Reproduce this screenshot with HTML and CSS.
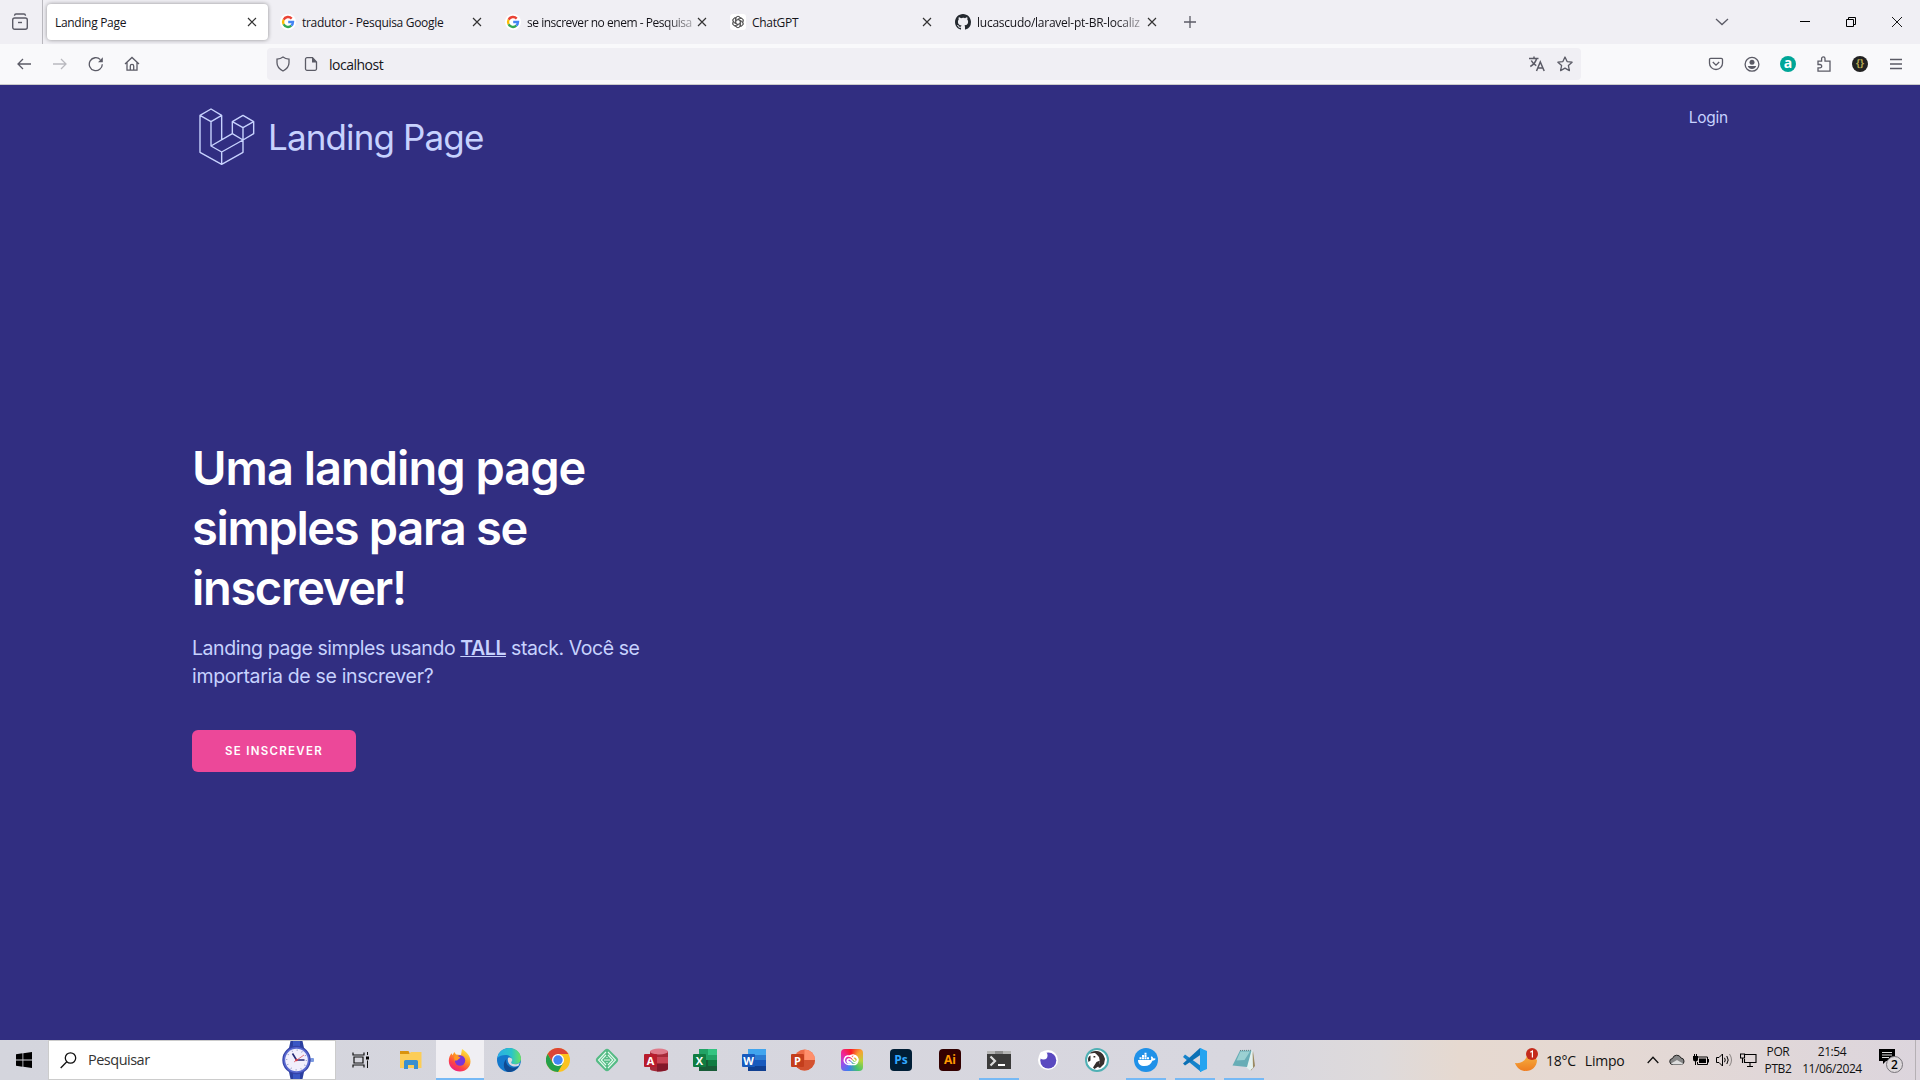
FILE: index.html
```html
<!DOCTYPE html>
<html lang="pt-BR">
<head>
<meta charset="utf-8">
<title>Landing Page</title>
<link rel="stylesheet" href="styles.css">
</head>
<body>
<svg class="defs" width="0" height="0" aria-hidden="true">
  <symbol id="close" viewBox="0 0 10 10"><path d="M1 1l8 8M9 1L1 9" fill="none" stroke="#333" stroke-width="1.15"/></symbol>
  <symbol id="google" viewBox="0 0 16 16"><circle cx="8" cy="8" r="8" fill="#fff"/><g fill="none" stroke-width="2.4"><path d="M11.7 4.6A5 5 0 0 0 3.6 5.7" stroke="#ea4335"/><path d="M3.6 5.7a5 5 0 0 0 0 4.6" stroke="#fbbc05"/><path d="M3.6 10.3a5 5 0 0 0 7.7 1.4" stroke="#34a853"/><path d="M11.3 11.7A5 5 0 0 0 13 8H8.2" stroke="#4285f4"/></g></symbol>
</svg>

<header class="browser">
  <div class="tabstrip">
    <div class="recent"><svg width="18" height="18" viewBox="0 0 18 18"><g fill="none" stroke="#5b5b66" stroke-width="1.4"><path d="M3.500 2.800C3.600 1.600 4 1 5 1h8c1 0 1.400.6 1.500 1.800"/><rect x="1.700" y="5" width="14.600" height="11.300" rx="2"/><path d="M7 9.500h4"/></g></svg></div>
    <div class="tab active"><span class="title">Landing Page</span><svg class="x"><use href="#close"/></svg></div>
    <div class="tab"><svg class="fav"><use href="#google"/></svg><span class="title">tradutor - Pesquisa Google</span><svg class="x"><use href="#close"/></svg></div>
    <div class="tab"><svg class="fav"><use href="#google"/></svg><span class="title fade">se inscrever no enem - Pesquisa</span><svg class="x"><use href="#close"/></svg></div>
    <div class="tab"><svg class="fav" viewBox="0 0 16 16"><rect width="16" height="16" rx="3" fill="#fff"/><g fill="none" stroke="#333" stroke-width=".65"><path id="petal" d="M6 8.900V5c0-3.300 4.200-3.300 4.600-.8M6 6.200l3.300-1.900c2.800-1.500 4.700 1.500 3.300 3.500"/><use href="#petal" transform="rotate(60 8 8)"/><use href="#petal" transform="rotate(120 8 8)"/><use href="#petal" transform="rotate(180 8 8)"/><use href="#petal" transform="rotate(240 8 8)"/><use href="#petal" transform="rotate(300 8 8)"/></g></svg><span class="title">ChatGPT</span><svg class="x"><use href="#close"/></svg></div>
    <div class="tab"><svg class="fav" viewBox="0 0 16 16"><path fill="#24292f" d="M8 0C3.580 0 0 3.580 0 8c0 3.540 2.290 6.530 5.470 7.590.4.070.55-.17.55-.38 0-.19-.01-.82-.01-1.490-2.010.37-2.530-.49-2.690-.94-.09-.23-.48-.94-.82-1.130-.28-.15-.68-.52-.01-.53.63-.01 1.080.58 1.230.82.72 1.210 1.870.87 2.330.66.070-.52.28-.87.51-1.070-1.780-.2-3.640-.89-3.640-3.950 0-.87.31-1.590.82-2.150-.08-.2-.36-1.020.08-2.120 0 0 .67-.21 2.200.82A7.600 7.600 0 0 1 8 3.860c.68 0 1.360.09 2 .27 1.530-1.040 2.200-.82 2.200-.82.44 1.100.16 1.920.08 2.120.51.56.82 1.270.82 2.150 0 3.070-1.870 3.750-3.650 3.950.29.25.54.73.54 1.480 0 1.070-.01 1.930-.01 2.200 0 .21.15.46.55.38A8.010 8.010 0 0 0 16 8c0-4.420-3.580-8-8-8z"/></svg><span class="title fade wide">lucascudo/laravel-pt-BR-localiz</span><svg class="x"><use href="#close"/></svg></div>
    <svg class="plus" width="14" height="14" viewBox="0 0 14 14"><path d="M7 1v12M1 7h12" stroke="#5b5b66" stroke-width="1.300"/></svg>
    <div class="winctl">
      <svg class="chev" width="14" height="8" viewBox="0 0 14 8"><path d="M1 1l6 5.500L13 1" fill="none" stroke="#5b5b66" stroke-width="1.300"/></svg>
      <svg width="46" height="44"><path d="M18 21.500h10" stroke="#000"/></svg>
      <svg width="46" height="44"><path d="M18.500 19.500h7v7h-7zM20.500 19.500v-2h7v7h-2" fill="none" stroke="#000"/></svg>
      <svg width="46" height="44"><path d="M18 17l10 10M28 17L18 27" stroke="#000" stroke-width=".9"/></svg>
    </div>
  </div>
  <div class="toolbar">
    <div class="nav">
      <svg viewBox="0 0 16 16"><path d="M15 8H2M7 3L2 8l5 5"/></svg>
      <svg class="off" viewBox="0 0 16 16"><path d="M1 8h13M9 3l5 5-5 5"/></svg>
      <svg viewBox="0 0 16 16"><path d="M14.300 8.200A6.500 6.500 0 1 1 12.400 3.600"/><path d="M14.800 1.200v5H10z" fill="#5b5b66" stroke="none"/></svg>
      <svg viewBox="0 0 16 16"><path d="M1 8l7-6.500L15 8M3 6.500V14.200h10V6.500M6.300 14v-4a1.700 1.700 0 0 1 3.400 0v4"/></svg>
    </div>
    <div class="url">
      <svg viewBox="0 0 16 16"><path d="M8 1c2 1.500 4 2 6 2.200v3.600c0 3.800-3 6.700-6 8.200-3-1.500-6-4.400-6-8.200V3.200C4 3 6 2.500 8 1z"/></svg>
      <svg viewBox="0 0 16 16"><path d="M9.500 1.700H4a1.500 1.500 0 0 0-1.500 1.500v9.600A1.500 1.500 0 0 0 4 14.300h8a1.500 1.500 0 0 0 1.500-1.500V6z"/><path d="M9 1.200V6.500h5z" fill="#5b5b66" stroke="none"/></svg>
      <span class="host">localhost</span>
      <svg viewBox="0 0 16 16"><path d="M0 2.500h9.500M5 .5v2M1.300 10.500c4-2.300 5.500-4.500 6.300-8M2.300 4.500c1 2.200 2.800 4 5 5.200M7.500 15l3.800-9 3.900 9M9 12h4.800" stroke-width="1.500"/></svg>
      <svg viewBox="0 0 16 16"><path d="M8 1l2.100 4.600 5 .6-3.700 3.400 1 5L8 12.100l-4.400 2.500 1-5L.9 6.200l5-.6z" stroke-linejoin="round"/></svg>
    </div>
    <div class="ext">
      <svg viewBox="0 0 16 16"><path d="M2.700 2.300h10.600c.7 0 1.200.5 1.200 1.200v3.700a6.500 6.300 0 0 1-13 0V3.500c0-.7.5-1.200 1.200-1.200zM4.800 6L8 9.200 11.200 6"/></svg>
      <svg viewBox="0 0 16 16"><circle cx="8" cy="8.300" r="6.900"/><g fill="#5b5b66" stroke="none"><circle cx="8" cy="6.300" r="2.500"/><path d="M3.800 10h8.400c-.5 1.900-2.200 2.900-4.200 2.900s-3.700-1-4.200-2.900z"/></g></svg>
      <span class="badge teal">a</span>
      <svg viewBox="0 0 16 16"><path d="M2 5.200h3.600V2.600a1.700 1.700 0 0 1 3.400 0v2.600h5v10H2v-3.300h2a1.700 1.700 0 0 0 0-3.400H2z"/></svg>
      <span class="badge dark">{}</span>
      <svg viewBox="0 0 16 16"><path d="M2 3.500h12M2 8h12M2 12.500h12"/></svg>
    </div>
  </div>
</header>

<main class="page">
  <nav class="top">
    <a class="brand"><svg width="57" height="58" viewBox="56 54 171 174"><path fill="none" stroke="#c7d2fe" stroke-width="4.200" stroke-linejoin="round" d="M92 57l32 19-32 19-33-19zM59 76v111l65 36 64-36v-37M92 95v73l32 18 64-36M124 76v74M92 168l64-37M124 186v37M188 76l32 19-32 18-32-18zM156 95v36l32 19 32-19V95M188 113v37"/></svg><span>Landing Page</span></a>
    <a class="login">Login</a>
  </nav>
  <section class="hero">
    <h1>Uma landing page<br><span class="tight">simples para se</span><br><span class="tight">inscrever!</span></h1>
    <p><span class="lead">Landing page simples usando <b>TALL</b> stack. Você se</span><br>importaria de se inscrever?</p>
    <button>SE INSCREVER</button>
  </section>
</main>

<footer class="taskbar">
  <div class="start"><svg width="16" height="16" viewBox="0 0 16 16"><path d="M0 2.200L6.500 1.300V7.600H0zM7.300 1.200L16 0v7.600H7.300zM0 8.400h6.500v6.300L0 13.800zM7.300 8.400H16V16l-8.700-1.200z"/></svg></div>
  <div class="search">
    <svg width="17" height="17" viewBox="0 0 17 17"><g fill="none" stroke="#111" stroke-width="1.300"><circle cx="10.500" cy="6" r="5.200"/><path d="M6.800 9.800L.7 16"/></g></svg>
    <span>Pesquisar</span>
    <svg class="watch" width="34" height="38" viewBox="0 0 34 38"><path d="M9.500 0h12l1.500 7H8zM8 31h15l-1.500 7h-12z" fill="#2b3fa0"/><path d="M12 0h7v6h-7zM12 32h7v6h-7z" fill="#3b57c4"/><rect x="29" y="17" width="4" height="4" rx="1" fill="#7d9be0"/><circle cx="15.500" cy="19" r="14.200" fill="#3543a8"/><circle cx="15.500" cy="19" r="13" fill="#5868cf"/><circle cx="15.500" cy="19" r="11.300" fill="#f1effc"/><circle cx="15.500" cy="19" r="9.800" fill="none" stroke="#8188b8" stroke-width="1.400" stroke-dasharray=".7 4.430"/><path d="M15.500 19l-4-6.500M15.500 19h8" stroke="#252a75" stroke-width="1.600"/><path d="M13 21l10-7" stroke="#e26a72" stroke-width=".9"/><circle cx="15.500" cy="19" r="1.300" fill="#d33b46"/></svg>
  </div>
  <div class="apps">
    <div class="app view"><svg width="18" height="16" viewBox="0 0 18 16"><path d="M1 .5V3h11V.5M1 15.500V13h11v2.500" fill="none" stroke="#111" stroke-width="1.200"/><path d="M2 5h9v6H2z" fill="none" stroke="#111" stroke-width="1.200"/><path d="M15.500 0v3M15.500 8.500V16" stroke="#111"/><path d="M14 4.500h3v3h-3z"/></svg></div>
    <div class="app"><svg viewBox="0 0 24 24"><path d="M1 4V3h8.500l1.500 3H1z" fill="#d9930c"/><path d="M1 6h9l2-2h10.500v16H1z" fill="#fccd57"/><path d="M5 13.500q0-1.500 1.500-1.500h11q1.500 0 1.500 1.500V21h-4v-4H9v4H5z" fill="#3a8fd0"/></svg></div>
    <div class="app on full"><svg viewBox="0 0 24 24"><defs><linearGradient id="ff" x1=".8" y1="0" x2=".2" y2="1"><stop offset="0" stop-color="#fff04a"/><stop offset=".4" stop-color="#ff9a22"/><stop offset=".7" stop-color="#ff4544"/><stop offset="1" stop-color="#e8178e"/></linearGradient></defs><path d="M14 1c4 2.500 8.500 6.500 8.500 12.500C22.500 19 18 23.500 12 23.500S.8 19 .8 13c0-3 1-5.600 2.700-7.700l1 2 1.800-3.300L8 6.500l5 .5z" fill="url(#ff)"/><circle cx="12" cy="12.500" r="5.200" fill="#7a35d8"/><path d="M6 8.500c3-1 5-.3 6.500 1.300-1.800.7-2.200 2.700-4.200 2.700-1.300 0-1.700.4-1.700 1.300z" fill="#ff9a22"/></svg></div>
    <div class="app"><svg viewBox="0 0 24 24"><defs><linearGradient id="eg"><stop offset="0" stop-color="#2aaee6"/><stop offset=".6" stop-color="#2bc4c9"/><stop offset="1" stop-color="#6be35f"/></linearGradient></defs><circle cx="12" cy="12" r="12" fill="#1478cc"/><path d="M.3 10C1.500 3.500 6.500 0 12 0c7 0 12 4.800 12 10.500 0 4-3 5.700-6 5.700-3 0-4.500-1-3.400-2.500C16.500 10.500 13 7 8.500 7 5 7 2 8 .3 10z" fill="url(#eg)"/><path d="M9.500 11c-1.500 3.500 1.500 8.700 6.800 8.700 2.300 0 4.300-.7 5.600-1.600C19.500 22.500 15 24.500 11 24 6 22.500 5.500 14 9.500 11z" fill="#104a91"/><path d="M11 10c3-1.500 5.500 1.500 3.600 3.700-1.100 1.500.4 2.500 3.400 2.500 2 0 4-.5 5-2l-1.500 3.600c-5 2.500-12-1-10.500-7.800z" fill="#d8d8df"/></svg></div>
    <div class="app"><svg viewBox="0 0 24 24"><circle cx="12" cy="12" r="12" fill="#fcc31e"/><path d="M1.600 6A12 12 0 0 1 22.400 6H12L6.800 15z" fill="#dc4437"/><path d="M1.600 6A12 12 0 0 0 12 24l5.200-9-10.400 0z" fill="#25a04b"/><circle cx="12" cy="12" r="6" fill="#fff"/><circle cx="12" cy="12" r="4.700" fill="#4285f4"/></svg></div>
    <div class="app"><svg viewBox="0 0 24 24"><rect x="3.200" y="3.200" width="17.600" height="17.600" rx="3.500" transform="rotate(45 12 12)" fill="#55bb85"/><path d="M11 4l-7.500 8 7.500 8M13 4l7.500 8-7.500 8M11 7l-4.800 5 4.800 5M13 7l4.800 5-4.800 5M9 12h6M12 9v1M12 14v1" fill="none" stroke="#e5faee" stroke-width="1.100"/></svg></div>
    <div class="app"><svg viewBox="0 0 24 24"><path d="M6 3v18c0 3.300 18 3.300 18 0V3z" fill="#a52a38"/><path d="M6 9h18v6H6z" fill="#c94455"/><ellipse cx="15" cy="3.500" rx="9" ry="3" fill="#df7a8a"/><path d="M13 16h11v5q-2 2.500-11 2.500z" fill="#83182a"/><rect y="6" width="13" height="13" rx="1" fill="#b81c2c"/><text x="6.500" y="16.500">A</text></svg></div>
    <div class="app"><svg viewBox="0 0 24 24"><path d="M6 1h18v22H6z" fill="#21a366"/><path d="M15 1h9v6h-9z" fill="#33c481"/><path d="M6 12h9v11H6z" fill="#185c37"/><path d="M15 12h9v6h-9z" fill="#107c41"/><path d="M15 18h9v5h-9z" fill="#185c37"/><rect y="6" width="13" height="13" rx="1" fill="#107c41"/><text x="6.500" y="16.500">X</text></svg></div>
    <div class="app"><svg viewBox="0 0 24 24"><path d="M6 1h18v6H6z" fill="#41a5ee"/><path d="M6 7h18v5H6z" fill="#2b7cd3"/><path d="M6 12h18v6H6z" fill="#185abd"/><path d="M6 18h18v5H6z" fill="#103f91"/><rect y="6" width="13" height="13" rx="1" fill="#185abd"/><text x="6.500" y="16.500">W</text></svg></div>
    <div class="app"><svg viewBox="0 0 24 24"><circle cx="13.500" cy="12" r="10.500" fill="#ed6c47"/><path d="M13.500 1.500A10.500 10.500 0 0 1 24 12H13.500z" fill="#ff8f6b"/><path d="M3 12h21a10.500 10.500 0 0 1-21 0z" fill="#d35230"/><rect y="6" width="13" height="13" rx="1" fill="#c43e1c"/><text x="6.500" y="16.500">P</text></svg></div>
    <div class="app"><span class="cc"><svg viewBox="0 0 22 22"><g fill="none" stroke="#fff" stroke-width="1.500"><path d="M11 15.500H7.500a4.300 4.300 0 1 1 2.800-7.600l4 3.800"/><path d="M8.300 7.500a5 5 0 1 1 5.700 8h-3l-4-3.800"/><path d="M10 12.800a2 2 0 1 1-.8-2.600l2.600 2.500a2.800 2.800 0 1 0 0-4.200"/></g></svg></span></div>
    <div class="app"><span class="adobe ps">Ps</span></div>
    <div class="app"><span class="adobe ai">Ai</span></div>
    <div class="app on"><svg viewBox="0 0 24 24"><path d="M0 3h24v18H0z" fill="#3b3b3b"/><path d="M0 3h24v3H0z" fill="#b5b5b5"/><path d="M8 3h8v3H8z" fill="#8d8d8d"/><path d="M3.500 8.500L8 13l-4.500 4.500" fill="none" stroke="#ddd" stroke-width="2.200"/><path d="M11 17h7" stroke="#fff" stroke-width="2"/></svg></div>
    <div class="app"><svg viewBox="0 0 24 24"><circle cx="12" cy="12" r="10" fill="#fff"/><circle cx="12.300" cy="12.500" r="8" fill="#5a49c0"/><circle cx="7.500" cy="7.500" r="4" fill="#fff"/></svg></div>
    <div class="app"><svg viewBox="0 0 24 24"><circle cx="12" cy="12" r="11" fill="#fff" stroke="#4fb0b4" stroke-width="2"/><path d="M4 6c2-2.500 5-3.500 8-3 4 .5 7 3.500 8 8l-1 5-4 4-2-1 2-5-1-5-4-4-5 .5z" fill="#38302e"/><path d="M6.500 6.500c2.500-2 5.500-.5 6.500 2.500l1.500 4-2.500 6-4.500.5L5 13l2-2z" fill="#fff"/><path d="M5.500 7.500c-2.500 1-3 3.500-2 6.500l2-1.500zM11.500 14l3.500-1.500-1 5.500-4.500 3-1.500-1.500zM8.500 8h1.800v1.500H8.500z" fill="#332d2b"/></svg></div>
    <div class="app on"><svg viewBox="0 0 24 24"><circle cx="12" cy="12" r="12" fill="#2091e8"/><path d="M4 12h13c.4-1 .3-2-.2-3l1-.8c.9.700 1.300 1.500 1.400 2.200 1-.2 2 0 2.500.4-.8 1.500-2 1.900-3.300 1.900C17 16 14.500 18 10.500 18 6.500 18 4 16 4 12z" fill="#fff"/><path d="M5.500 9.300h2v2h-2zM8 9.300h2v2H8zM10.500 9.300h2v2h-2zM13 9.300h2v2h-2zM8 7h2v2H8zM10.500 7h2v2h-2zM10.500 4.700h2v2h-2z" fill="#fff"/></svg></div>
    <div class="app on"><svg viewBox="0 0 24 24"><path d="M17 0l7 3v18l-7 3z" fill="#24a4f0"/><path d="M2 6.500L18 18v6L0 9z" fill="#1583cb"/><path d="M0 15.500L17 0l1 6.500L2 17.500z" fill="#0b70b5"/><path d="M17 0l3 1.500V22.500L17 24z" fill="#24a4f0"/></svg></div>
    <div class="app on"><svg viewBox="0 0 24 24"><path d="M21 3l2 15-4 4.500-3-4z" fill="#9b8a62"/><path d="M8 2l12.500 0 .5 18-3 2.500L14 19z" fill="#e4f1ef"/><path d="M8 2.500l11.500 0-4.500 16.500L.5 17.500z" fill="#68adb6"/><path d="M8.500 3.500l9.500 0-5.500 8.500-8 .5z" fill="#9bd0d2"/><path d="M8 2.500l12-.2" stroke="#667d80" stroke-dasharray="1 1"/></svg></div>
  </div>
  <div class="tray">
    <svg width="24" height="24" viewBox="0 0 24 24"><defs><linearGradient id="mn" x2="0" y2="1"><stop offset="0" stop-color="#f7bd48"/><stop offset="1" stop-color="#ef7d20"/></linearGradient></defs><path d="M13 3c-.5 8-5 13-13 12 2 5.500 6 8 11 8 6 0 11-4.500 11-11z" fill="url(#mn)"/><circle cx="17" cy="6" r="6" fill="#c42b1c"/><path d="M15.300 4.300L17.400 3v6.500" fill="none" stroke="#fff" stroke-width="1.200"/></svg>
    <span class="weather"><span>18°C</span><span>Limpo</span></span>
    <svg width="12" height="8" viewBox="0 0 12 8"><path d="M.7 7L6 1.300 11.300 7" fill="none" stroke="#111" stroke-width="1.300"/></svg>
    <svg class="cloud" width="16" height="12" viewBox="0 0 16 12"><path d="M4 10.500a3 3 0 0 1-.5-6A4.500 4.500 0 0 1 12 4a3.300 3.300 0 0 1 .5 6.500z" fill="#858585" stroke="#222"/><path d="M2 9.500l6-3.500 6 3.500-1 1H4z" fill="#ddd"/></svg>
    <svg class="bat" width="16" height="12" viewBox="0 0 16 12"><path d="M4.500 5.500V3h10v7.500h-10V8" fill="none" stroke="#000"/><path d="M6 4.500h7V9H6zM14.500 5H16v3.500h-1.500zM0 2h5v3a2.500 2.500 0 0 1-5 0zM1 0h1v2H1zM3 0h1v2H3zM2 7h1v4H2z"/></svg>
    <svg class="vol" width="17" height="14" viewBox="0 0 17 14"><path d="M.5 4.500H3L6.500 1v12L3 9.500H.5z" fill="none" stroke="#000"/><path d="M8.500 4.800q1.500 2.200 0 4.400M10.800 3q2.800 4 0 8" fill="none" stroke="#000"/><path d="M13.500 1q4 6 0 12" fill="none" stroke="#8b8584"/></svg>
    <svg class="net" width="17" height="14" viewBox="0 0 17 14"><path d="M5 1.500h11v8H4.500V6M7 13.500h6M10 9.500v4M.5 1h4v4h-4zM2.500 5v5" fill="none" stroke="#000" stroke-width="1.100"/></svg>
    <div class="lang">POR<br>PTB2</div>
    <div class="clock">21:54<br>11/06/2024</div>
    <svg class="note" width="26" height="26" viewBox="0 0 26 26"><path d="M0 0h16v12H7l-3 3v-3H0z"/><path d="M3 3.500h10M3 6h10M3 8.500h7" stroke="#ddd"/><circle cx="15.500" cy="15.500" r="8" fill="#ddd8db" stroke="#77747a"/><text class="count" x="15.500" y="20">2</text></svg>
    <i class="peek"></i>
  </div>
</footer>
</body>
</html>
```
FILE: styles.css
```css
* { box-sizing: border-box; }
body { margin: 0; width: 1920px; height: 1080px; overflow: hidden; display: flex; flex-direction: column; font-family: "Open Sans", "Noto Sans", sans-serif; color: #15141a; }
svg { display: block; flex: none; }
.defs { position: absolute; }

/* browser chrome */
.browser { flex: none; height: 85px; background: #f9f9fb; border-bottom: 1px solid #ccc; }
.tabstrip { height: 44px; display: flex; align-items: center; background: #f0eff4; }
.recent { width: 43px; height: 44px; padding: 13px 0 0 11px; border-right: 1px solid #b9b8be; }
.tab { width: 221px; height: 36px; margin-left: 4px; padding: 0 11px 0 8px; display: flex; align-items: center; border-radius: 4px; font-size: 12px; }
.active { background: #fff; box-shadow: 0 0 4px rgba(0,0,0,.4); }
.fav { width: 16px; height: 16px; margin-right: 6px; }
.title { flex: 1; min-width: 0; white-space: nowrap; letter-spacing: -.31px; line-height: 20px; padding-top: 1px; }
.fade { letter-spacing: -.47px; -webkit-mask-image: linear-gradient(90deg, #000 82%, rgba(0,0,0,.25)); mask-image: linear-gradient(90deg, #000 82%, rgba(0,0,0,.25)); }
.wide { letter-spacing: -.25px; }
.x { width: 10px; height: 10px; margin-left: 2px; }
.plus { margin-left: 15px; }
.winctl { margin-left: auto; display: flex; align-items: center; }
.chev { margin-right: 53px; }
.toolbar { height: 40px; display: flex; align-items: center; }
.toolbar svg { width: 16px; height: 16px; fill: none; stroke: #5b5b66; stroke-width: 1.3; }
.nav { width: 267px; display: flex; gap: 20px; padding-left: 16px; }
.off { opacity: .4; }
.url { width: 1314px; height: 32px; display: flex; align-items: center; gap: 12px; padding: 0 8px; background: #f0eff4; border-radius: 4px; }
.host { flex: 1; font-size: 14px; letter-spacing: -.5px; margin-left: -2px; padding-top: 1px; }
.ext { margin-left: auto; padding-right: 16px; display: flex; gap: 20px; }
.badge { width: 16px; height: 16px; border-radius: 50%; text-align: center; font-weight: 700; color: #fff; }
.teal { background: #00a698; font-size: 14px; line-height: 13px; }
.dark { background: #222; color: #b7a850; font-size: 10px; line-height: 14px; }

/* landing page */
.page { flex: none; height: 955px; padding: 22px 192px 0; background: #312e81; color: #c7d2fe; font-family: Inter, "Open Sans", sans-serif; }
.top { display: flex; justify-content: space-between; align-items: flex-start; }
.brand { display: flex; align-items: center; gap: 12px; padding-left: 7px; height: 60px; font-size: 35px; letter-spacing: -.87px; }
.brand span { line-height: 50px; }
.login { font-size: 15.5px; line-height: 21px; letter-spacing: -.25px; }
.hero { padding-top: 271px; }
h1 { margin: 0; font-size: 47px; line-height: 60px; font-weight: 600; color: #fff; letter-spacing: -1px; }
.tight { letter-spacing: -1.34px; }
p { margin: 16px 0 0; font-size: 19.5px; line-height: 28px; letter-spacing: -.33px; }
.lead { letter-spacing: -.43px; }
b { font-weight: 600; text-decoration: underline; }
button { display: block; width: 164px; height: 42px; margin-top: 40px; padding: 0; border: 0; border-radius: 6px; background: #ec4899; color: #fff; font: 600 11.5px/42px Inter, sans-serif; letter-spacing: 1.3px; }

/* taskbar */
.taskbar { flex: none; height: 40px; display: flex; background: linear-gradient(90deg, #d4d5dd 0, #d8d7df 1250px, #dedadb 1380px, #e6d9d0 1460px, #e5d9d3 1600px, #dcd5dd 1920px); }
.start { width: 48px; padding: 12px 16px; }
.search { width: 288px; height: 40px; padding-left: 11px; display: flex; align-items: center; background: #fff; border: 1px solid #ccc; font-size: 14.5px; color: #333; }
.search span { margin: 0 0 1px 11px; letter-spacing: -.5px; }
.watch { margin-left: auto; margin-right: 20px; }
.apps { display: flex; gap: 1px; margin-left: 2px; }
.app { position: relative; width: 48px; height: 40px; display: flex; align-items: center; justify-content: center; }
.view { padding-right: 2px; }
.app > svg:not([width]) { width: 24px; height: 24px; }
.app text { font: 700 11px "Open Sans", sans-serif; fill: #fff; text-anchor: middle; }
.on::after { content: ""; position: absolute; left: 4px; right: 4px; bottom: 0; height: 2px; background: #76b9f5; }
.full { background: #f0eff3; }
.full::after { left: 0; right: 0; }
.adobe, .cc { width: 22px; height: 22px; border-radius: 4px; text-align: center; font-weight: 700; font-size: 12px; line-height: 21px; }
.ps { background: #001e36; color: #31a8ff; }
.ai { background: #330000; color: #ff9a00; }
.cc { background: conic-gradient(from 45deg, #f8a030, #b8d33b, #45c46b, #3d7df0, #a04be8, #f0259c, #fb1b22, #f8a030); }
.tray { margin-left: auto; display: flex; align-items: center; font-size: 12px; line-height: 17px; text-align: center; color: #111; }
.weather { display: flex; gap: 9px; margin-left: 7px; font-size: 14px; width: 101px; letter-spacing: -.25px; }
.cloud { margin-left: 10px; }
.bat { margin-left: 8px; }
.vol { margin-left: 7px; }
.net { margin-left: 7px; }
.lang { width: 30px; margin-left: 6px; letter-spacing: -.4px; }
.clock { width: 62px; margin-left: 8px; letter-spacing: -.4px; }
.note { margin: 4px 0 0 16px; }
.count { font: 600 12px "Open Sans", sans-serif; text-anchor: middle; }
.peek { width: 1px; height: 40px; margin: 0 4px 0 10px; background: #b5b0b4; }
```
